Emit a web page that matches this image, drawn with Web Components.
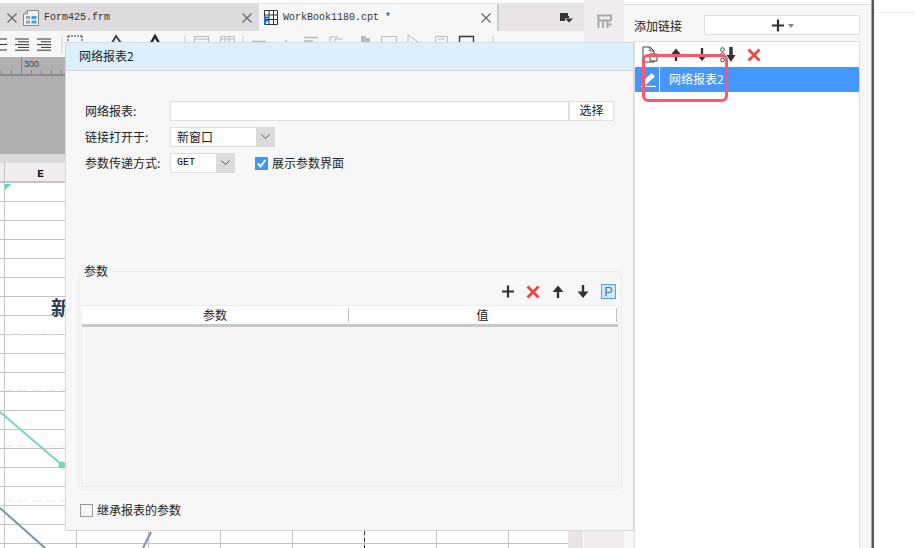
<!DOCTYPE html>
<html lang="zh">
<head>
<meta charset="utf-8">
<title>网络报表2</title>
<style>
  html, body { margin: 0; background: #fff; }
  body { font: 12px "Noto Sans CJK SC", "Liberation Sans", sans-serif; color: #222; overflow: hidden; }
</style>
</head>
<body>
<app-shell>
  <work-space slot="work"></work-space>
  <side-panel slot="side"></side-panel>
  <link-dialog slot="dialog" heading="网络报表2"></link-dialog>
</app-shell>

<script>
const ICONS = {
  plus: '<path d="M1 6.500h12M7 .5v12" stroke="#333" stroke-width="2.200" fill="none"/>',
  cross: '<path d="M1.500 1.500l11 11M12.500 1.500l-11 11" stroke="#f4433c" stroke-width="2.800" fill="none"/>',
  up: '<path d="M7 13V5" stroke="#333" stroke-width="2.400"/><path d="M1.500 7L7 .5 12.500 7z" fill="#333"/>',
  down: '<path d="M7 0v8" stroke="#333" stroke-width="2.400"/><path d="M1.500 6.500L7 13l5.500-6.500z" fill="#333"/>',
  form: '<path d="M4.500 .5h11v15h-15v-11.500z" fill="#f2f2f2" stroke="#8a8a8a"/><path d="M4.500 .5v3.500h-4" fill="none" stroke="#8a8a8a"/><path d="M3 6h4v3H3zM3 10.500h4v3H3z" fill="#9aa4ae"/><path d="M8.500 6h5v3h-5zM8.500 10.500h5v3h-5z" fill="#4fa0e0"/>',
  book: '<path d="M.5 .5h13v14h-13zM.5 5h13M5 .5v14M9.500 .5v14M.5 9.500h13" fill="#fff" stroke="#333"/><path d="M0 6.500h5v2H2v1h3v2H2v3.500H0z" fill="#1a6fc0"/>',
  close: '<path d="M.5 .5l9 9M9.500 .5l-9 9" stroke="#666" stroke-width="1.200" fill="none"/>',
  chevron: '<path d="M.5 .5l4 4 4-4" stroke="#555" fill="none"/>',
  file: '<path d="M1 1h7l4 4v11H1z" fill="#fff" stroke="#444"/><path d="M8 1v4h4" fill="none" stroke="#444"/><path d="M8 8h7v7H8z" fill="#fdf3cf" stroke="#444"/>',
  dotdown: '<circle cx="2.500" cy="2.500" r="1.800" fill="none" stroke="#444"/><circle cx="2.500" cy="7.500" r="1.800" fill="none" stroke="#444"/><circle cx="2.500" cy="13" r="1.800" fill="none" stroke="#444"/><path d="M11 0v9" stroke="#333" stroke-width="3.500"/><path d="M6.500 8h9L11 15z" fill="#333"/>',
  pen: '<path d="M1 10.500L10.500 1l3.500 3.500L4.500 13H1z" fill="#fff"/><path d="M0 14.500h15" stroke="#fff" stroke-width="1.300"/>',
  flag: '<path d="M0 0h8v3h1v2H5v3H0z" fill="#333"/><path d="M5 5.500h8L9 9.500z" fill="#333"/>',
  dock: '<path d="M1 2.500h15M2.500 2.500V15M7 7v8M11.500 7v8M2.500 7.500h13M15 2.500v5M11.500 11.500h4" stroke="#aaa" stroke-width="2" fill="none"/>'
};

class BaseElement extends HTMLElement {
  constructor() {
    super();
    this.attachShadow({ mode: 'open' });
    this.shadowRoot.innerHTML = this.render();
  }
  attr(name, fallback = '') {
    return this.getAttribute(name) ?? fallback;
  }
  render() {
    return '';
  }
}

class AppIcon extends BaseElement {
  render() {
    const w = this.attr('w', 14), h = this.attr('h', 14);
    return `<style>:host{display:inline-flex;flex:none;line-height:0}</style>
      <svg width="${w}" height="${h}" viewBox="0 0 ${w} ${h}">${ICONS[this.attr('name')]}</svg>`;
  }
}

class AppShell extends BaseElement {
  render() {
    return `<style>
      :host { display: grid; grid-template-columns: 584px 40px 247px 3px 1fr; height: 548px; position: relative; overflow: hidden; }
      .dock { background: #f0ecf0; padding: 13px 0 0 12px; }
      .edge { background: linear-gradient(90deg, #aaa 0 1px, #555 1px); }
      .rest { background: #fff; padding-top: 12px; }
      .rest div { height: 1px; background: #eee; }
      ::slotted(link-dialog) { position: absolute; left: 65px; top: 42px; }
    </style>
    <slot name="work"></slot>
    <div class="dock"><app-icon name="dock" w="17" h="16"></app-icon></div>
    <slot name="side"></slot>
    <div class="edge"></div>
    <div class="rest"><div></div></div>
    <slot name="dialog"></slot>`;
  }
}

class FileTab extends BaseElement {
  render() {
    const active = this.hasAttribute('active');
    const icon = this.attr('icon');
    return `<style>
      :host { display: flex; align-items: center; width: ${this.attr('width')}px; box-sizing: border-box; padding: 0 ${this.attr('rpad', 6)}px 0 ${this.attr('pad', 9)}px;
        font: 10px "Liberation Mono", monospace; color: #333; background: ${active ? '#f7f7f7' : 'transparent'};
        ${active ? 'border-right: 2px solid #ccc;' : ''} }
      span { margin-left: 5px; flex: 1; white-space: pre; }
    </style>
    ${icon ? `<app-icon name="${icon}" w="${icon === 'form' ? 16 : 14}" h="16"></app-icon>` : ''}
    <span><slot></slot></span>
    <app-icon name="close" w="10" h="10"></app-icon>`;
  }
}

class TabBar extends BaseElement {
  render() {
    return `<style>
      :host { display: flex; height: 28px; margin-top: 3px; background: #dddbdd; border-top: 1px solid #e4e4e4; box-sizing: border-box; }
      .gap { flex: 1; background: #e8e4e8; display: flex; align-items: center; justify-content: flex-end; padding-right: 11px; }
    </style>
    <file-tab width="15" pad="2" rpad="3"></file-tab>
    <file-tab width="244" icon="form" pad="8" rpad="7">Form425.frm</file-tab>
    <file-tab width="240" icon="book" pad="5" active>WorkBook1180.cpt *</file-tab>
    <div class="gap"><app-icon name="flag" w="13" h="10"></app-icon></div>`;
  }
}

class TopToolbar extends BaseElement {
  render() {
    const lines = (x1, x2, x3) => [0, 1, 2, 3, 4].map(i => {
      const y = 8 + i * 2.8, odd = i % 2;
      return `<path d="M${odd ? x2 : x1} ${y}H${x3}" stroke="#333"/>`;
    }).join('');
    return `<style>
      :host { display: block; height: 26px; background: #f7f7f7; }
      svg { display: block; }
    </style>
    <svg width="584" height="26" fill="none">
      <path d="M0 8h7M0 13.500h7M0 19h7" stroke="#333"/>
      ${lines(15, 18, 29)}
      ${lines(37, 41, 51)}
      <path d="M62 5v17M185 5v11M243 5v11M493 5v11" stroke="#ccc"/>
      <path d="M68 5h14M68 5v6M82 5v6" stroke="#333" stroke-dasharray="2 1"/>
      <path d="M112 12l4-7 5 7" stroke="#444" stroke-width="2"/>
      <path d="M151 12l4-7 4 7" stroke="#222" stroke-width="2.500"/>
      <path d="M194.500 11V5.500h14V11M194 8h14M220.500 11V5.500h14V11M220 8h14M225 5v6M229 5v6" stroke="#bbb"/>
      <path d="M252 10.500h14M286 9v2M304 6.500h14M304 10h9" stroke="#bbb" stroke-width="1.500"/>
      <path d="M330 11V6h8M335 11V8h8" stroke="#bbb"/>
      <path d="M361 5h5v6h-5zM366 7h4v4h-4z" fill="#bbb"/>
      <path d="M381.500 11V5.500h15V11M408 4l10 7M408 4v7M435.500 11V5.500h12V11M438 8h7" stroke="#bbb"/>
      <path d="M459.500 11V5.500h14V11M459 5.500h15" stroke="#333" stroke-width="1.300"/>
    </svg>`;
  }
}

class SheetArea extends BaseElement {
  render() {
    const dash = [335, 390, 446, 501].map(y => `<path d="M4 ${y}H66" stroke="#e2ebf4" stroke-dasharray="9 5"/>`).join('');
    return `<style>
      :host { display: flex; flex-direction: column; flex: 1; min-height: 0; }
      .ruler { height: 17px; background: #b1afb1; border-bottom: 2px solid #8f8f8f; box-sizing: content-box; position: relative; }
      .ruler span { position: absolute; left: 24px; top: 1px; font: 9px "Liberation Sans", sans-serif; line-height: 12px; color: #444; }
      .ruler svg { display: block; }
      .pasteboard { height: 78px; background: #b1afb1; }
      .band { height: 9px; background: #dcdadc; }
      .colhead { height: 20px; background: #f0ecf0; border-bottom: 2px solid #c4c4c4; box-sizing: border-box; display: flex; padding-left: 4px; }
      .colhead div { width: 72px; box-sizing: border-box; text-align: center; border-left: 1px solid #c4c4c4; font: bold 11px/22px "Liberation Mono", monospace; color: #111; }
      .grid { flex: 1; display: grid; grid-template-columns: 568px 15px 1px; min-height: 0; }
      .cells { position: relative; overflow: hidden; background-color: #fff;
        background-image: repeating-linear-gradient(90deg, #c4c4c4 0 1px, transparent 1px 72px), repeating-linear-gradient(180deg, transparent 0 18px, #c4c4c4 18px 19px);
        background-position: 4px 0, 0 0; background-repeat: no-repeat; }
      .cells svg { position: absolute; left: 0; top: 0; }
      .title { position: absolute; left: 51px; top: 112px; font: bold 20px/26px "Noto Sans CJK SC", sans-serif; color: #2c3e50; }
      .bar { background: #e8e4e8; }
    </style>
    <div class="ruler">
      <svg width="584" height="17"><path d="M21.500 0v17M1.500 13v4M11.500 13v4M31.500 13v4M41.500 13v4M51.500 13v4M61.500 13v4" stroke="#888"/></svg>
      <span>300</span>
    </div>
    <div class="pasteboard"></div>
    <div class="band"></div>
    <div class="colhead"><div>E</div></div>
    <div class="grid">
      <div class="cells">
        <svg width="568" height="365" viewBox="0 183 568 365" fill="none">
          ${dash}
          <path d="M5 184h6l-6 6z" fill="#2ee8c8"/>
          <path d="M364.500 531v17" stroke="#333" stroke-dasharray="4 3"/>
          <path d="M0 412L62 465" stroke="#72d7bd" stroke-width="2"/>
          <circle cx="62" cy="465" r="3.500" fill="#72d7bd"/>
          <path d="M0 508L45 548M151 532L143 548" stroke="#7595b3" stroke-width="2"/>
        </svg>
        <span class="title">新</span>
      </div>
      <div class="bar"></div>
      <div></div>
    </div>`;
  }
}

class WorkSpace extends BaseElement {
  render() {
    return `<style>:host { display: flex; flex-direction: column; height: 548px; min-width: 0; }</style>
      <tab-bar></tab-bar>
      <top-toolbar></top-toolbar>
      <sheet-area></sheet-area>`;
  }
}

class PickSelect extends BaseElement {
  render() {
    const latin = this.hasAttribute('latin');
    return `<style>
      :host { display: inline-flex; width: ${this.attr('width')}px; height: 20px; background: #fff; box-sizing: border-box; border: 1px solid #e0e0e0; }
      span { flex: 1; padding-left: 6px; font: ${latin ? '10px/18px "Liberation Mono", monospace' : '12px/18px "Noto Sans CJK SC", sans-serif'}; color: ${latin ? '#000' : 'inherit'}; }
      div { width: 19px; background: #dcdadc; margin: -1px -1px -1px 0; display: flex; align-items: center; justify-content: center; }
    </style>
    <span><slot></slot></span>
    <div><app-icon name="chevron" w="9" h="6"></app-icon></div>`;
  }
}

class TickBox extends BaseElement {
  render() {
    const on = this.hasAttribute('checked');
    return `<style>
      :host { display: inline-flex; align-items: center; gap: 4px; line-height: 16px; }
      i { width: 13px; height: 13px; box-sizing: border-box; display: flex; border: 1px solid ${on ? '#3f98ee' : '#999'}; background: ${on ? '#3f98ee' : '#f7f7f7'}; }
      svg { display: block; }
    </style>
    <i>${on ? '<svg width="11" height="11" fill="none"><path d="M2 5.500l2.500 3L9.500 2" stroke="#fff" stroke-width="2"/></svg>' : ''}</i>
    <span><slot></slot></span>`;
  }
}

class ParamsBox extends BaseElement {
  render() {
    return `<style>
      :host { display: block; margin: 0 11px 0 12px; }
      fieldset { margin: 0; padding: 0 2px 2px; height: 226px; box-sizing: border-box; border: 1px solid #ececec; border-radius: 5px; display: flex; flex-direction: column; min-width: 0; }
      legend { margin-left: 0; padding: 0 3px; line-height: 14px; font-size: 12px; }
      .tools { height: 27px; flex: none; display: flex; align-items: center; justify-content: flex-end; gap: 11px; padding: 0 3px 0 0; box-sizing: border-box; }
      .p { width: 15px; height: 15px; box-sizing: border-box; border: 1px solid #4aa3ff; background: #cfe8ff; color: #66788a; font: 13px/13px "Liberation Sans", sans-serif; text-align: center; }
      .table { flex: 1; border: 1px solid #eee; display: flex; flex-direction: column; }
      .head { height: 21px; box-sizing: border-box; background: #fff; border-bottom: 3px solid #c8c8c8; display: grid; grid-template-columns: 267px 268px; }
      .head div { text-align: center; font-size: 12px; height: 14px; margin-top: 2px; line-height: 14px; border-right: 1px solid #c4c0b8; }
      .body { flex: 1; background: #f6f6f6; }
    </style>
    <fieldset>
      <legend>参数</legend>
      <div class="tools">
        <app-icon name="plus" w="14" h="13"></app-icon>
        <app-icon name="cross" w="14" h="14"></app-icon>
        <app-icon name="up" w="14" h="14"></app-icon>
        <app-icon name="down" w="14" h="14"></app-icon>
        <div class="p">P</div>
      </div>
      <div class="table">
        <div class="head"><div>参数</div><div>值</div></div>
        <div class="body"></div>
      </div>
    </fieldset>`;
  }
}

class LinkDialog extends BaseElement {
  render() {
    return `<style>
      :host { display: flex; flex-direction: column; width: 569px; height: 489px; box-sizing: border-box; background: #f7f7f7; border: 1px solid #d8d8d8; border-top-color: #d4dde4; font-size: 12px; color: #222; }
      header { height: 28px; flex: none; box-sizing: border-box; background: #dcf0ff; border-bottom: 1px solid #d6d6d6; padding-left: 13px; font-size: 12px; line-height: 26px; }
      form { margin: 30px 19px 0; display: grid; grid-template-columns: 85px 1fr; row-gap: 6px; align-items: center; }
      label { line-height: 20px; white-space: nowrap; }
      .url { display: flex; height: 20px; }
      .url div { flex: 1; background: #fff; border: 1px solid #e0e0e0; border-right-width: 2px; box-sizing: border-box; }
      .url button { width: 44px; padding: 0 0 2px; border: 1px solid #e0e0e0; border-left: 0; background: #fff; font: inherit; line-height: 16px; color: inherit; border-radius: 0; }
      .line { display: flex; align-items: center; gap: 20px; }
      params-box { margin-top: 91px; }
      footer { margin: 12px 0 0 14px; }
    </style>
    <header>${this.attr('heading')}</header>
    <form>
      <label>网络报表:</label>
      <div class="url"><div></div><button type="button">选择</button></div>
      <label>链接打开于:</label>
      <div class="line"><pick-select width="105">新窗口</pick-select></div>
      <label>参数传递方式:</label>
      <div class="line"><pick-select width="65" latin>GET</pick-select><tick-box checked>展示参数界面</tick-box></div>
    </form>
    <params-box></params-box>
    <footer><tick-box>继承报表的参数</tick-box></footer>`;
  }
}

class SidePanel extends BaseElement {
  render() {
    return `<style>
      :host { display: flex; flex-direction: column; position: relative; height: 548px; box-sizing: border-box; margin-top: 4px; border-top: 1px solid #ddd; background: #f7f7f7; padding: 10px 11px 0 10px; font-size: 12px; color: #222; }
      .add { display: flex; align-items: center; height: 20px; flex: none; }
      .add span { width: 70px; }
      .add div { flex: 1; height: 20px; box-sizing: border-box; background: #fff; border: 1px solid #e0e0e0; display: flex; align-items: center; justify-content: center; gap: 3px; }
      .add i { border: 3px solid transparent; border-top: 4px solid #888; border-bottom: 0; margin-top: 1px; }
      .list { margin-top: 6px; flex: 1; background: #fff; border: 1px solid #e0e0e0; }
      .tools { height: 25px; display: flex; align-items: center; padding-left: 7px; }
      .row { height: 25px; background: #4397ff; color: #fff; display: flex; align-items: center; }
      .row b { width: 25px; height: 25px; box-sizing: border-box; border-right: 1px solid #fff; display: flex; align-items: center; padding: 0 0 0 6px; }
      .row span { margin: -2px 0 0 9px; }
      .mark { position: absolute; left: 18px; top: 49px; width: 86px; height: 48px; box-sizing: border-box; border: 3px solid #fa5870; border-radius: 6px; }
    </style>
    <div class="add"><span>添加链接</span><div><app-icon name="plus" w="14" h="13"></app-icon><i></i></div></div>
    <div class="list">
      <div class="tools">
        <app-icon name="file" w="16" h="17"></app-icon>
        <app-icon name="up" w="14" h="14" style="margin-left:11px"></app-icon>
        <app-icon name="down" w="14" h="14" style="margin-left:12px"></app-icon>
        <app-icon name="dotdown" w="16" h="16" style="margin-left:11px"></app-icon>
        <app-icon name="cross" w="14" h="14" style="margin-left:11px"></app-icon>
      </div>
      <div class="row"><b><app-icon name="pen" w="15" h="15"></app-icon></b><span>网络报表2</span></div>
    </div>
    <div class="mark"></div>`;
  }
}

customElements.define('app-icon', AppIcon);
customElements.define('file-tab', FileTab);
customElements.define('tab-bar', TabBar);
customElements.define('top-toolbar', TopToolbar);
customElements.define('sheet-area', SheetArea);
customElements.define('work-space', WorkSpace);
customElements.define('pick-select', PickSelect);
customElements.define('tick-box', TickBox);
customElements.define('params-box', ParamsBox);
customElements.define('link-dialog', LinkDialog);
customElements.define('side-panel', SidePanel);
customElements.define('app-shell', AppShell);
</script>
</body>
</html>
